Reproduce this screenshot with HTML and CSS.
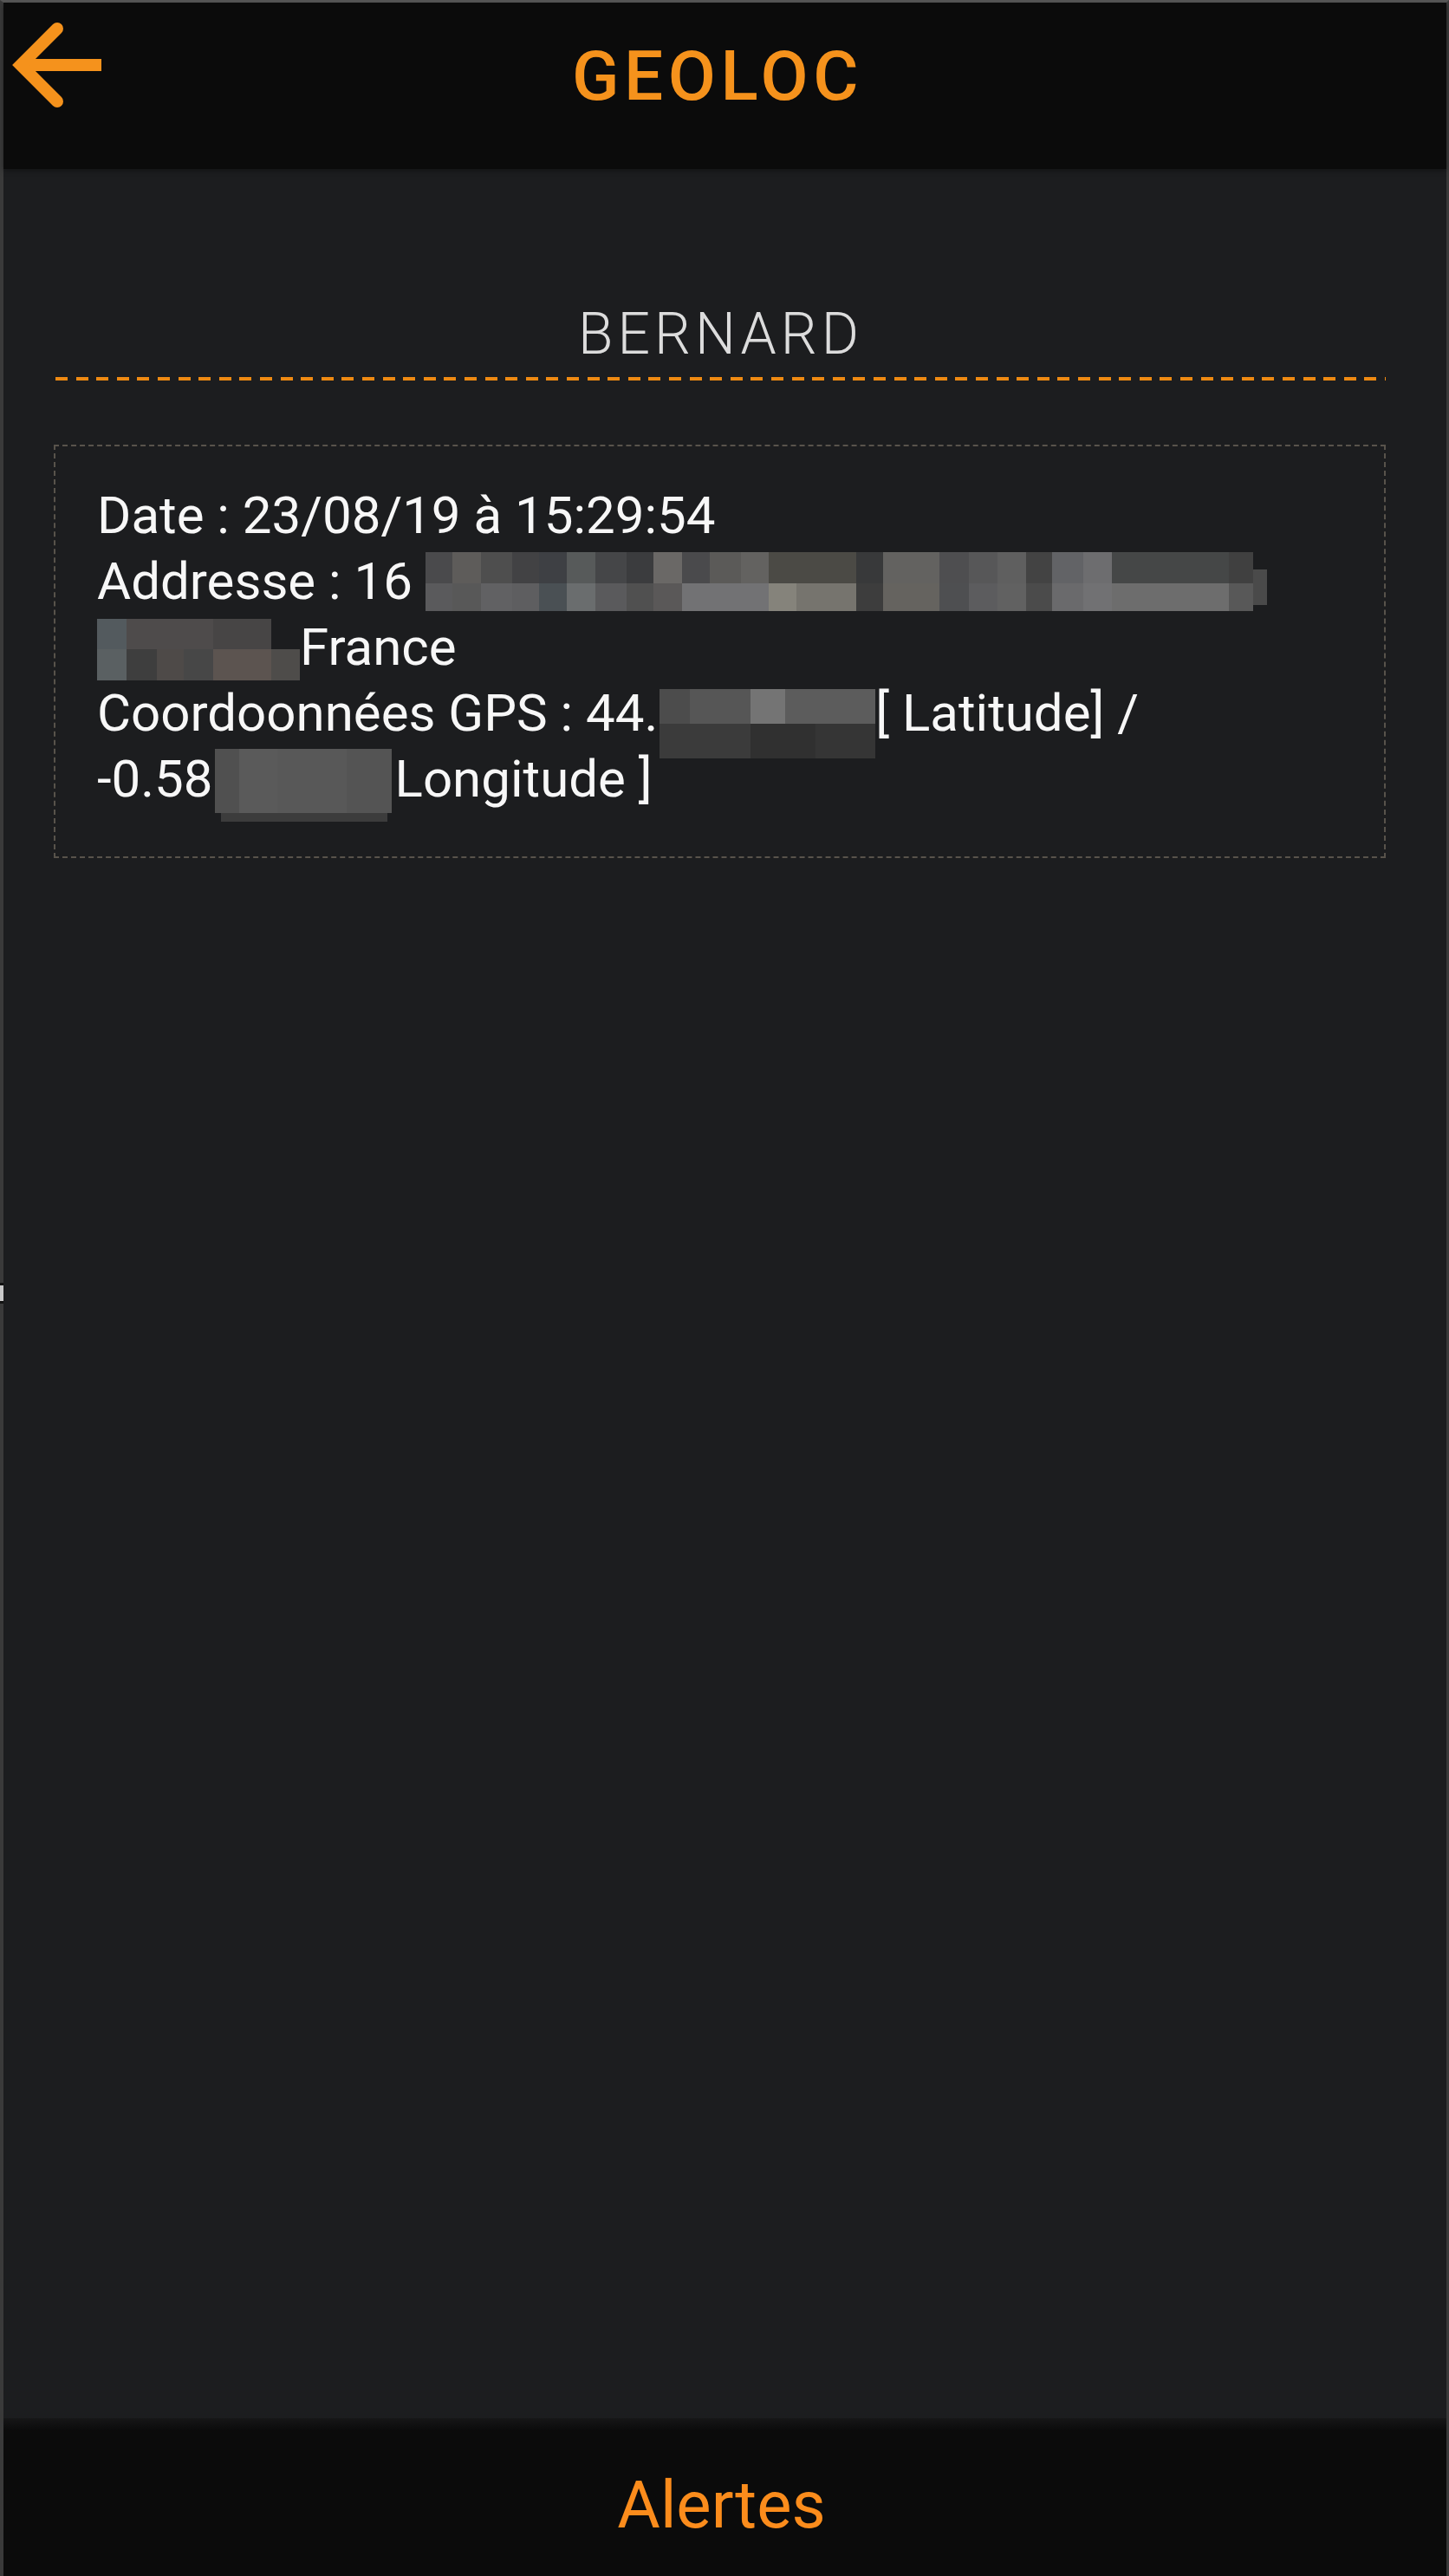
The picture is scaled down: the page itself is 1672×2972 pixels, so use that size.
FILE: index.html
```html
<!DOCTYPE html>
<html lang="fr">
<head>
<meta charset="utf-8">
<title>GEOLOC</title>
<link rel="stylesheet" href="styles.css">
</head>
<body>
<div class="screen">
  <header class="topbar">
    <button class="back" aria-label="Retour">
      <svg width="130" height="140" viewBox="0 0 130 140">
        <path d="M117 72 H26" fill="none" stroke="#f5921c" stroke-width="14" stroke-linecap="butt"/>
        <path d="M66 30 L24 72 L66 114" fill="none" stroke="#f5921c" stroke-width="14" stroke-linecap="round" stroke-linejoin="miter"/>
      </svg>
    </button>
    <h1 class="title">GEOLOC</h1>
    <div class="spacer"></div>
  </header>

  <main class="content">
    <h2 class="name">BERNARD</h2>
    <div class="divider"></div>
    <section class="card">
      <p class="info">Date : 23/08/19 à 15:29:54<br>Addresse : 16 <span class="redact r1"></span><br><span class="redact r2"></span>France<br>Coordoonnées GPS : 44.<span class="redact r3"></span>[ Latitude] /<br>-0.58<span class="redact r4"></span>Longitude ]</p>
    </section>
  </main>

  <footer class="bottombar">
    <span class="tab">Alertes</span>
  </footer>
  <span class="edge-mark"></span>
</div>
</body>
</html>
```

FILE: styles.css
```css
* { box-sizing: border-box; }

html, body {
  margin: 0;
  padding: 0;
  background: #1c1d1f;
}

body {
  font-family: Roboto, "Liberation Sans", Arial, sans-serif;
}

.screen {
  position: relative;
  display: flex;
  flex-direction: column;
  width: 1672px;
  height: 2972px;
  background: #1c1d1f;
  border-top: 3px solid #585858;
  border-left: 4px solid #3a3a3a;
  border-right: 3px solid #3a3a3a;
}

/* ---------- header ---------- */
.topbar {
  display: grid;
  grid-template-columns: 1fr auto 1fr;
  align-items: start;
  height: 192px;
  padding-right: 22px;
  background: #0b0b0b;
  box-shadow: 0 2px 6px rgba(0, 0, 0, 0.35);
  flex: 0 0 auto;
}

.back {
  justify-self: start;
  margin: 0;
  padding: 0;
  border: 0;
  background: transparent;
  width: 130px;
  height: 140px;
  margin-left: -4px;
  cursor: pointer;
}

.back svg { display: block; }

.title {
  margin: 45px 0 0 5px;
  font-size: 80px;
  line-height: 80px;
  font-weight: 500;
  letter-spacing: 5.5px;
  color: #f5921c;
}

/* ---------- content ---------- */
.content {
  flex: 1 1 auto;
  padding: 0 70px 0 58px;
}

.name {
  margin: 158px 0 0;
  text-align: center;
  font-size: 66px;
  line-height: 66px;
  font-weight: 300;
  letter-spacing: 5px;
  padding-left: 2px;
  color: #dcdcdc;
}

.divider {
  height: 4px;
  margin: 16px 0 0 2px;
  background: repeating-linear-gradient(to right, #ee8a12 0 14px, transparent 14px 23.6px);
}

.card {
  margin-top: 74px;
  border: 2px dashed #58534b;
  padding: 42px 48px 51px 48px;
}

.info {
  margin: 0;
  font-size: 60px;
  line-height: 76px;
  font-weight: 400;
  color: #f7f7f7;
}

.redact {
  display: inline-block;
  vertical-align: baseline;
}

.r1 {
  width: 971px;
  height: 68px;
  margin-bottom: -14px;
  background:
    linear-gradient(to right, #4a4a4c 0 31px, #5e5c5a 31px 64px, #4e4e4e 64px 100px, #424244 100px 131px, #3e4044 131px 163px, #575a5a 163px 196px, #454648 196px 232px, #3b3c3e 232px 263px, #6a6866 263px 296px, #4a4a4c 296px 328px, #5b5a58 328px 364px, #636260 364px 396px, #4b4a45 396px 497px, #38393a 497px 528px, #636260 528px 593px, #4e4e50 593px 627px, #575758 627px 660px, #5f5f5f 660px 693px, #434343 693px 723px, #626366 723px 759px, #6d6d6f 759px 792px, #454747 792px 927px, #404040 927px 955px) left top / 955px 36px no-repeat,
    linear-gradient(to right, #5a5a5c 0 31px, #585858 31px 64px, #616163 64px 100px, #5e5e60 100px 131px, #4a5054 131px 163px, #6a6d6e 163px 196px, #5a5a5c 196px 232px, #505050 232px 263px, #5a5858 263px 296px, #727274 296px 396px, #85837b 396px 428px, #76746e 428px 497px, #3d3d3d 497px 528px, #65635f 528px 593px, #4e4f51 593px 627px, #5c5c5e 627px 660px, #616161 660px 693px, #4b4b4b 693px 723px, #6a6a6c 723px 759px, #717173 759px 792px, #6d6d6d 792px 927px, #585858 927px 955px) left bottom / 955px 32px no-repeat,
    linear-gradient(#4a4a4a, #4a4a4a) right 0 top 20px / 16px 41px no-repeat;
}

.r2 {
  width: 234px;
  height: 71px;
  margin-bottom: -18px;
  background:
    linear-gradient(to right, #535a5e 0 34px, #4e4b4b 34px 134px, #474545 134px 201px, transparent 201px) left top / 234px 35px no-repeat,
    linear-gradient(to right, #5a6062 0 34px, #3e3e3e 34px 69px, #4e4a48 69px 100px, #474747 100px 134px, #5c5450 134px 201px, #4e4c4a 201px 234px) left bottom / 234px 36px no-repeat;
}

.r3 {
  width: 249px;
  height: 80px;
  margin-bottom: -32px;
  margin-left: 2px;
  background:
    linear-gradient(to right, #4c4c4c 0 35px, #565656 35px 105px, #747474 105px 145px, #5c5c5c 145px 249px) left top / 249px 40px no-repeat,
    linear-gradient(to right, #3b3b3b 0 105px, #303030 105px 180px, #353535 180px 249px) left bottom / 249px 40px no-repeat;
}

.r4 {
  width: 204px;
  height: 84px;
  margin-bottom: -29px;
  margin-left: 2px;
  margin-right: 4px;
  background:
    linear-gradient(to right, #505050 0 28px, #5a5a5a 28px 72px, #585858 72px 152px, #545454 152px 204px) left top / 204px 74px no-repeat,
    linear-gradient(#3c3c3c, #3c3c3c) 7px 74px / 192px 10px no-repeat;
}

/* ---------- footer ---------- */
.bottombar {
  flex: 0 0 182px;
  display: flex;
  justify-content: center;
  align-items: flex-start;
  padding-top: 62px;
  padding-right: 8px;
  background: linear-gradient(to bottom, #161617 0, #0b0b0b 14px, #0b0b0b 100%);
}

.tab {
  font-size: 76px;
  line-height: 76px;
  font-weight: 400;
  color: #fb8c1c;
}

/* small glare on the left frame edge */
.edge-mark {
  position: absolute;
  left: -4px;
  top: 1477px;
  width: 4px;
  height: 24px;
  background: #c9c9c9;
  border-top: 3px solid #111;
  border-bottom: 3px solid #111;
}
```
